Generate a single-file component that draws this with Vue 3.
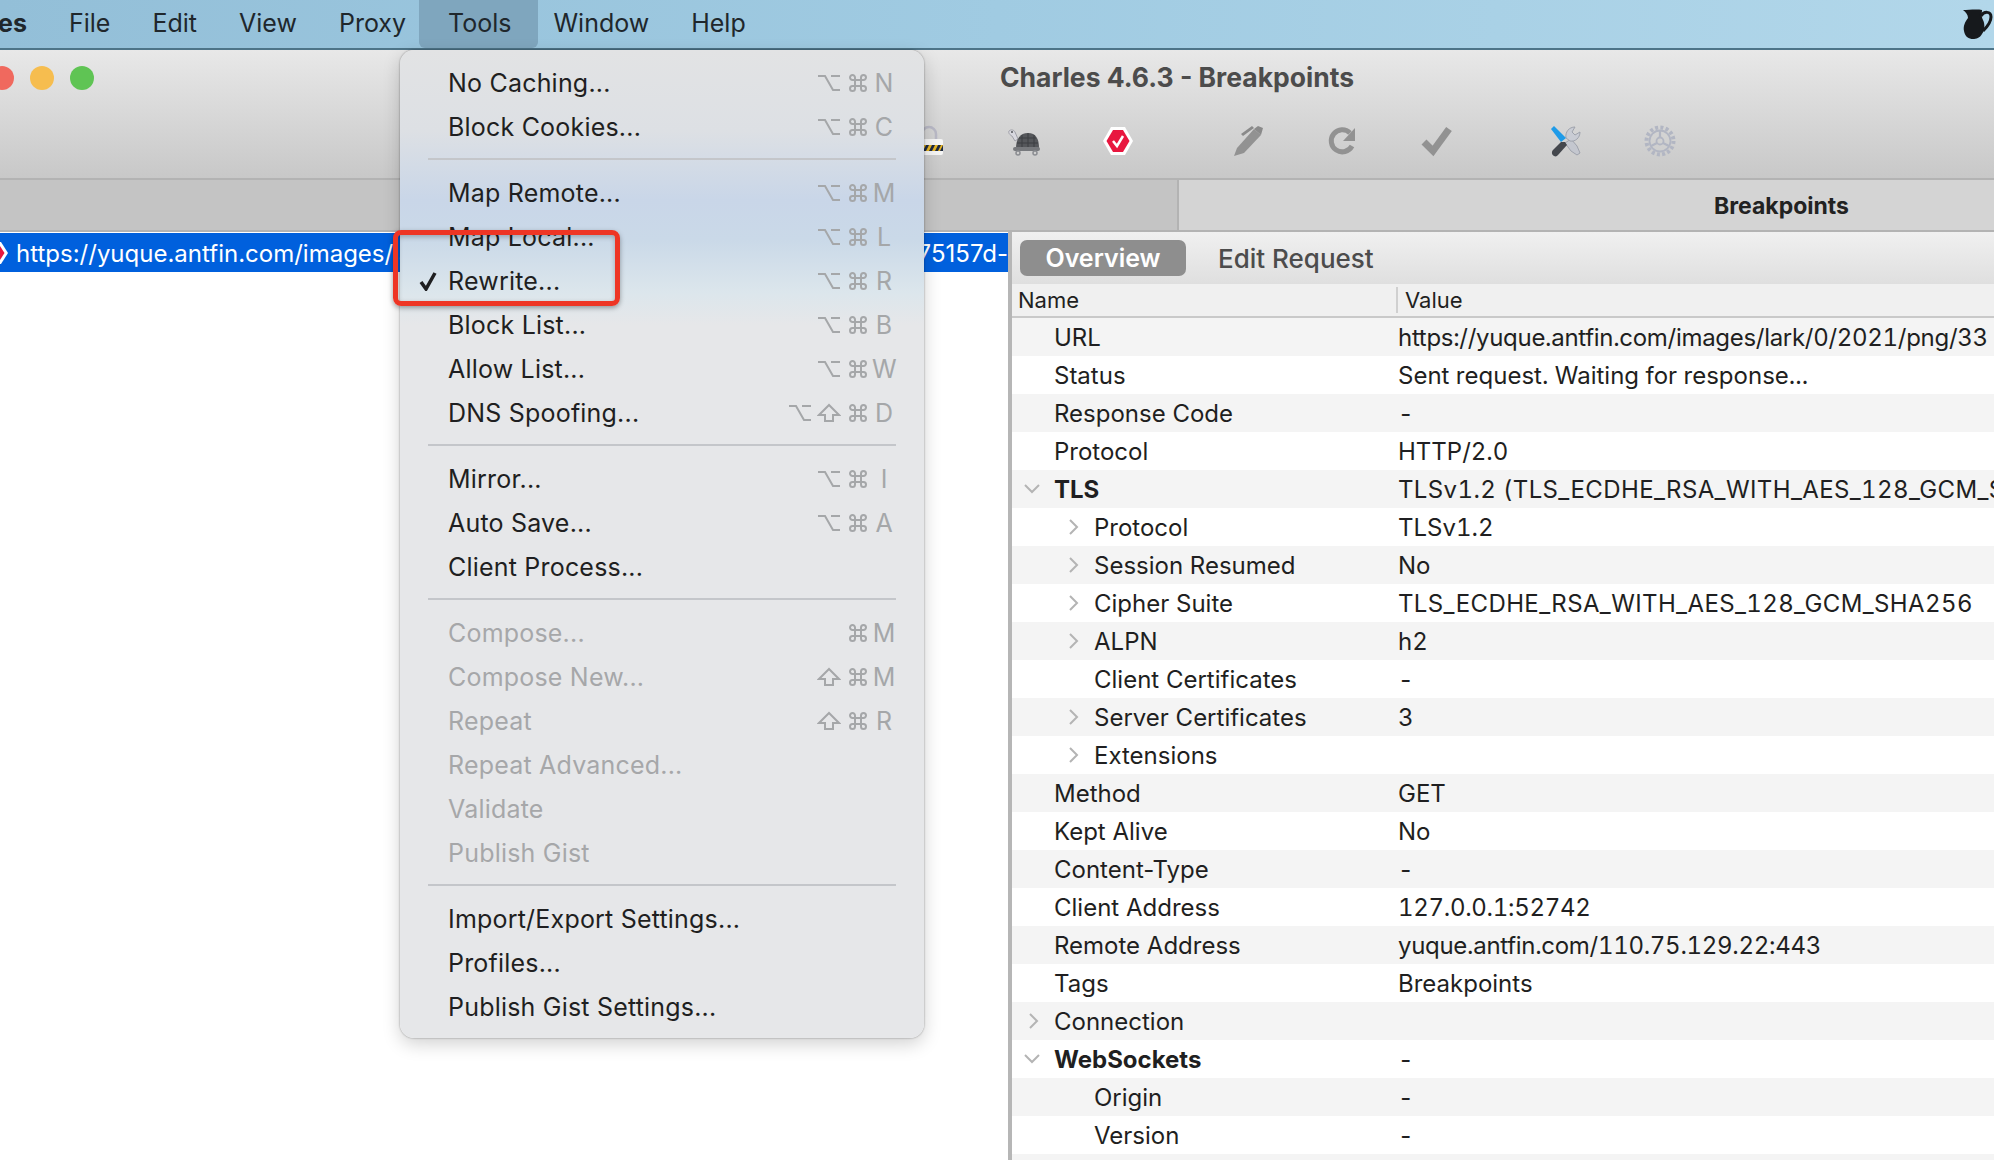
<script setup>
const menuItems = ['File', 'Edit', 'View', 'Proxy', 'Tools', 'Window', 'Help']

const toolGroups = [
  [
    { label: 'No Caching...', keys: ['opt', 'cmd'], key: 'N' },
    { label: 'Block Cookies...', keys: ['opt', 'cmd'], key: 'C' },
  ],
  [
    { label: 'Map Remote...', keys: ['opt', 'cmd'], key: 'M' },
    { label: 'Map Local...', keys: ['opt', 'cmd'], key: 'L' },
    { label: 'Rewrite...', keys: ['opt', 'cmd'], key: 'R', checked: true },
    { label: 'Block List...', keys: ['opt', 'cmd'], key: 'B' },
    { label: 'Allow List...', keys: ['opt', 'cmd'], key: 'W' },
    { label: 'DNS Spoofing...', keys: ['opt', 'shift', 'cmd'], key: 'D' },
  ],
  [
    { label: 'Mirror...', keys: ['opt', 'cmd'], key: 'I' },
    { label: 'Auto Save...', keys: ['opt', 'cmd'], key: 'A' },
    { label: 'Client Process...' },
  ],
  [
    { label: 'Compose...', keys: ['cmd'], key: 'M', disabled: true },
    { label: 'Compose New...', keys: ['shift', 'cmd'], key: 'M', disabled: true },
    { label: 'Repeat', keys: ['shift', 'cmd'], key: 'R', disabled: true },
    { label: 'Repeat Advanced...', disabled: true },
    { label: 'Validate', disabled: true },
    { label: 'Publish Gist', disabled: true },
  ],
  [
    { label: 'Import/Export Settings...' },
    { label: 'Profiles...' },
    { label: 'Publish Gist Settings...' },
  ],
]

const rows = [
  { name: 'URL', value: 'https://yuque.antfin.com/images/lark/0/2021/png/33', kind: 'digits' },
  { name: 'Status', value: 'Sent request. Waiting for response...' },
  { name: 'Response Code', value: '-' },
  { name: 'Protocol', value: 'HTTP/2.0' },
  { name: 'TLS', value: 'TLSv1.2 (TLS_ECDHE_RSA_WITH_AES_128_GCM_SHA256)', bold: true, open: true, kind: 'caps' },
  { name: 'Protocol', value: 'TLSv1.2', level: 1, closed: true },
  { name: 'Session Resumed', value: 'No', level: 1, closed: true },
  { name: 'Cipher Suite', value: 'TLS_ECDHE_RSA_WITH_AES_128_GCM_SHA256', level: 1, closed: true, kind: 'caps' },
  { name: 'ALPN', value: 'h2', level: 1, closed: true },
  { name: 'Client Certificates', value: '-', level: 1 },
  { name: 'Server Certificates', value: '3', level: 1, closed: true },
  { name: 'Extensions', value: '', level: 1, closed: true },
  { name: 'Method', value: 'GET' },
  { name: 'Kept Alive', value: 'No' },
  { name: 'Content-Type', value: '-' },
  { name: 'Client Address', value: '127.0.0.1:52742', kind: 'digits' },
  { name: 'Remote Address', value: 'yuque.antfin.com/110.75.129.22:443', kind: 'digits' },
  { name: 'Tags', value: 'Breakpoints' },
  { name: 'Connection', value: '', closed: true },
  { name: 'WebSockets', value: '-', bold: true, open: true },
  { name: 'Origin', value: '-', level: 1 },
  { name: 'Version', value: '-', level: 1 },
  { name: '', value: '' },
]
</script>

<template>
  <div class="screen">
    <header class="menubar">
      <span class="app-name">es</span>
      <span
        v-for="item in menuItems"
        :key="item"
        class="menubar-item"
        :class="{ 'menubar-item--open': item === 'Tools' }"
      >{{ item }}</span>
      <svg class="jug" viewBox="0 0 32 32" width="32" height="32">
        <path d="M1 2c5 0 14-1 19 0 0 3-1 6 1 10 2 4 2 10-1 14-2 4-6 5-9 5-4 0-8-2-9-8-1-5 1-9 4-13 0-3-2-6-5-8z" fill="#16191c" />
        <path d="M19 8c3-5 10-5 10 1 0 6-5 11-8 14" fill="none" stroke="#16191c" stroke-width="3" />
      </svg>
    </header>

    <div class="window">
      <div class="titlebar">
        <div class="lights">
          <i class="light light--red"></i>
          <i class="light light--yellow"></i>
          <i class="light light--green"></i>
        </div>
        <span class="title">Charles 4.6.3 - Breakpoints</span>
      </div>

      <div class="toolbar">
        <svg class="tool" viewBox="0 0 32 32">
          <path d="M8 16V9a7 7 0 0 1 14 0v7" fill="none" stroke="#b9b9c6" stroke-width="2.5" />
          <rect x="3" y="14" width="26" height="16" rx="2" fill="#f5f5f5" />
          <path d="M3 20h26v6H3z" fill="#1d2a44" />
          <path d="M6 26l3-6h3l-3 6zM12 26l3-6h3l-3 6zM18 26l3-6h3l-3 6zM24 26l3-6h2l-3 6z" fill="#e6b422" />
        </svg>
        <svg class="tool" viewBox="0 0 32 32">
          <path d="M1 6c2-2 5-1 6 1l3 7-3 2-3-5C2 10 0 8 1 6z" fill="#d8d8df" stroke="#a0a0a8" />
          <circle cx="4" cy="7" r="1" fill="#55575b" />
          <path d="M8 23c0-9 4-15 12-15s11 6 11 15z" fill="#55575b" />
          <path d="M14 10v13M20 8v15M26 10v13M9 18h21M11 13h17" stroke="#3d3f42" stroke-width="1" fill="none" />
          <rect x="5" y="22" width="27" height="4" rx="2" fill="#77797d" />
          <circle cx="10" cy="28" r="2" fill="none" stroke="#8b8d92" stroke-width="1.5" />
          <circle cx="27" cy="28" r="2" fill="none" stroke="#8b8d92" stroke-width="1.5" />
        </svg>
        <svg class="tool" viewBox="0 0 32 32">
          <path d="M9 2h14l8 14-8 14H9L1 16z" fill="#fff" />
          <path d="M11 5h10l6.500 11-6.500 11H11L4.500 16z" fill="#e8173f" />
          <path d="M11 16l4 5 6-10" fill="none" stroke="#fff" stroke-width="2.5" />
        </svg>
        <svg class="tool tool--group" viewBox="0 0 32 32">
          <path d="M1 31l3-8L21 4l7 6-17 18z" fill="#929292" />
          <path d="M21 4l4-3 5 2-2 7zM8 9L19 1l2 2L10 11z" fill="#8a8a8a" />
        </svg>
        <svg class="tool" viewBox="0 0 32 32">
          <path d="M25 21a11 11 0 1 1-2-13" fill="none" stroke="#929292" stroke-width="5" />
          <path d="M28 3v13H16z" fill="#929292" />
        </svg>
        <svg class="tool" viewBox="0 0 32 32">
          <path d="M3 17l9 9L28 4" fill="none" stroke="#929292" stroke-width="7" />
        </svg>
        <svg class="tool tool--group tool--tools" viewBox="0 0 32 32">
          <path d="M21 14L27 21l3 7-3 2-6-4-6-8z" fill="#c4c7cf" stroke="#9fa3ad" />
          <path d="M16 13c-1-6 3-11 9-11l-3 5 3 3 5-3c0 6-5 10-10 9z" fill="#c9ccd4" stroke="#9fa3ad" />
          <path d="M11 17l5-4-12-12-3 3z" fill="#1f9be8" />
          <path d="M11 17L3 25c-2 2-1 5 1 6 2 1 3 0 4-1l9-10-2-3z" fill="#44474d" />
        </svg>
        <svg class="tool" viewBox="0 0 32 32">
          <g fill="none" stroke="#b2b6c3">
            <circle cx="16" cy="16" r="13.500" stroke-width="4" stroke-dasharray="3 2.300" />
            <circle cx="16" cy="16" r="10.500" stroke-width="1.800" />
            <circle cx="16" cy="16" r="3.500" stroke-width="1.800" />
            <path d="M16 6v6M7 21l6-3M25 21l-6-3" stroke-width="2.200" />
          </g>
        </svg>
      </div>
    </div>

    <div class="tabs">
      <div class="tab tab--blank"></div>
      <div class="tab tab--active">Breakpoints</div>
    </div>

    <div class="content">
      <section class="requests">
        <div class="request">
          <svg class="request-icon" viewBox="0 0 10 24" width="10" height="24">
            <path d="M0 1h1l7 11-7 11H0z" fill="#fff" />
            <path d="M0 5l4.500 7L0 19z" fill="#e8173f" />
          </svg>
          <span class="request-url">https://yuque.antfin.com/images/lark/0/2021/png/33</span>
          <span class="request-end">75157d-</span>
        </div>
      </section>

      <section class="details">
        <div class="detail-tabs">
          <span class="pill">Overview</span>
          <span class="detail-tab">Edit Request</span>
        </div>
        <div class="table-head">
          <span class="col-name">Name</span>
          <span class="col-value">Value</span>
        </div>
        <div
          v-for="(row, i) in rows"
          :key="i"
          class="row"
          :class="{ 'row--odd': i % 2 === 0, 'row--bold': row.bold }"
        >
          <div class="row-name" :class="{ 'row-name--nested': row.level }">
            <svg v-if="row.open" class="chevron chevron--open" viewBox="0 0 16 10" width="16" height="10">
              <path d="M1 1l7 7 7-7" />
            </svg>
            <svg v-if="row.closed" class="chevron" viewBox="0 0 10 16" width="10" height="16">
              <path d="M1 1l7 7-7 7" />
            </svg>
            <span>{{ row.name }}</span>
          </div>
          <div class="row-value" :class="row.kind && `row-value--${row.kind}`">{{ row.value }}</div>
        </div>
      </section>
    </div>

    <nav class="dropdown">
      <template v-for="(group, g) in toolGroups" :key="g">
        <hr v-if="g > 0" class="separator" />
        <div
          v-for="entry in group"
          :key="entry.label"
          class="entry"
          :class="{ 'entry--disabled': entry.disabled }"
        >
          <svg v-if="entry.checked" class="check" viewBox="0 0 20 20" width="20" height="20">
            <path d="M3 11l5 7L17 2" fill="none" stroke="#1f1f21" stroke-width="3.500" />
          </svg>
          <span class="entry-label">{{ entry.label }}</span>
          <span v-if="entry.key" class="shortcut">
            <span v-for="k in entry.keys" :key="k" class="glyph">
              <svg v-if="k === 'opt'" viewBox="0 0 22 18" width="22" height="18">
                <path d="M0 2h7l8 14h7M13 2h9" />
              </svg>
              <svg v-else-if="k === 'shift'" viewBox="0 0 24 20" width="24" height="20">
                <path d="M12 2L2 12h6v6h8v-6h6z" />
              </svg>
              <svg v-else viewBox="0 0 20 20" width="20" height="20">
                <path d="M7 7V4.500A2.500 2.500 0 1 0 4.500 7H15.500A2.500 2.500 0 1 0 13 4.500V15.500A2.500 2.500 0 1 0 15.500 13H4.500A2.500 2.500 0 1 0 7 15.500z" />
              </svg>
            </span>
            <span class="letter">{{ entry.key }}</span>
          </span>
        </div>
      </template>
    </nav>

    <div class="callout"></div>
  </div>
</template>

<style scoped>
.screen {
  position: relative;
  width: 1994px;
  height: 1160px;
  overflow: hidden;
  display: flex;
  flex-direction: column;
  background: #fff;
  font-family: Inter, "Noto Sans", "Liberation Sans", sans-serif;
  color: #1f1f21;
}

.menubar {
  height: 48px;
  flex: none;
  display: flex;
  align-items: stretch;
  background: linear-gradient(90deg, #93bfd8, #a0cbe2 50%, #b2d7ea);
  border-bottom: 2px solid #4d7488;
  font-size: 25px;
  color: #20272c;
}

.app-name {
  width: 50px;
  margin-left: -2px;
  line-height: 46px;
  font-weight: 700;
}

.menubar-item {
  padding: 0 21px;
  line-height: 46px;
}

.menubar-item--open {
  background: #7fa6be;
  border-radius: 0 0 6px 6px;
  padding: 0 27px 0 29px;
  margin: 0 -6px 0 -8px;
}

.jug {
  margin: 8px 0 0 auto;
}

.window {
  flex: none;
  height: 128px;
  display: flex;
  flex-direction: column;
  background: linear-gradient(180deg, #e8e8e8, #c8c8c8);
  border-bottom: 2px solid #b3b3b3;
}

.titlebar {
  position: relative;
  height: 54px;
  display: flex;
  align-items: center;
  justify-content: center;
  padding-left: 360px;
}

.lights {
  position: absolute;
  left: -10px;
  top: 16px;
  display: flex;
  gap: 16px;
}

.light {
  width: 24px;
  height: 24px;
  border-radius: 50%;
}

.light--red { background: #f0695e; }
.light--yellow { background: #f6bd4f; }
.light--green { background: #5fc454; }

.title {
  font-size: 26.5px;
  font-weight: 700;
  color: #4c4c4c;
}

.toolbar {
  display: flex;
  align-items: center;
  gap: 62px;
  height: 64px;
  padding: 5px 0 0 914px;
}

.tool {
  flex: none;
  width: 32px;
  height: 32px;
}

.tool--group {
  margin-left: 37px;
}

.tool--tools {
  margin-left: 35px;
}

.tabs {
  flex: none;
  display: flex;
  height: 50px;
  border-bottom: 2px solid #b3b3b3;
}

.tab--blank {
  width: 1177px;
  background: #c4c4c4;
  border-right: 2px solid #b3b3b3;
}

.tab--active {
  flex: 1;
  display: flex;
  align-items: center;
  justify-content: center;
  padding: 2px 0 0 390px;
  background: #d4d4d4;
  font-size: 23px;
  font-weight: 700;
  color: #222;
}

.content {
  flex: 1;
  min-height: 0;
  display: flex;
}

.requests {
  width: 1008px;
  flex: none;
  padding-top: 1px;
  border-right: 4px solid #b6b6b6;
}

.request {
  height: 39px;
  box-sizing: border-box;
  padding-top: 2px;
  display: flex;
  align-items: center;
  overflow: hidden;
  background: #0060dd;
  color: #fff;
  font-size: 24px;
  white-space: nowrap;
}

.request-icon {
  flex: none;
  margin: -2px 6px 0 0;
}

.request-url {
  flex: 1;
  min-width: 0;
  overflow: hidden;
}

.details {
  flex: 1;
  min-width: 0;
  overflow: hidden;
  font-size: 24px;
}

.detail-tabs {
  height: 52px;
  display: flex;
  align-items: center;
  padding: 0 0 0 8px;
  background: linear-gradient(180deg, #f0f0f0, #dfdfdf);
}

.pill {
  width: 166px;
  height: 36px;
  display: flex;
  align-items: center;
  justify-content: center;
  background: #8e8e8e;
  border-radius: 7px;
  color: #fff;
  font-weight: 600;
  font-size: 25px;
}

.detail-tab {
  margin-left: 32px;
  font-size: 26px;
  font-weight: 500;
  color: #4c4c4c;
}

.table-head {
  height: 32px;
  display: flex;
  align-items: center;
  background: #f0f0f0;
  border-bottom: 2px solid #c9c9c9;
  font-size: 22px;
}

.col-name {
  width: 384px;
  box-sizing: border-box;
  padding-left: 6px;
}

.col-value {
  flex: 1;
  padding-left: 7px;
  border-left: 2px solid #d0d0d0;
}

.row {
  height: 38px;
  display: flex;
  align-items: center;
  white-space: nowrap;
}

.row--odd {
  background: #f4f4f4;
}

.row-name {
  position: relative;
  width: 386px;
  box-sizing: border-box;
  flex: none;
  padding-left: 42px;
}

.row-name--nested {
  padding-left: 82px;
}

.row--bold .row-name {
  font-weight: 700;
}

.row-value {
  overflow: hidden;
  font-variant-numeric: tabular-nums;
}

.row-value--digits {
  letter-spacing: -0.3px;
}

.row-value--caps {
  letter-spacing: 0.38px;
}

.chevron {
  position: absolute;
  left: 17px;
  top: 50%;
  transform: translateY(-50%);
  fill: none;
  stroke: #b4b4b4;
  stroke-width: 2;
}

.chevron--open {
  left: 12px;
}

.row-name--nested .chevron {
  left: 57px;
}

.dropdown {
  position: absolute;
  left: 400px;
  top: 50px;
  width: 524px;
  height: 988px;
  box-sizing: border-box;
  padding: 11px 0 9px;
  border-radius: 14px;
  background: linear-gradient(180deg, #e2e3e4 0, #dde0e4 80px, #c9d6e8 150px, #cad9e8 190px, #dce6ec 243px, #e6e7e9 275px, #e6e7e9 100%);
  box-shadow: 0 0 2px rgba(0, 0, 0, 0.45), 0 6px 18px rgba(0, 0, 0, 0.18);
  font-size: 25px;
}

.separator {
  height: 2px;
  margin: 9px 28px 11px;
  border: 0;
  background: #c4c6ca;
}

.entry {
  position: relative;
  height: 44px;
  display: flex;
  align-items: center;
  padding-left: 48px;
  letter-spacing: 0.2px;
}

.entry--disabled {
  color: #a6a7a9;
}

.check {
  position: absolute;
  left: 18px;
  top: 12px;
}

.shortcut {
  position: absolute;
  left: 385px;
  top: 0;
  height: 44px;
  width: 111px;
  display: flex;
  align-items: center;
  justify-content: flex-end;
  color: #a5a7a9;
  letter-spacing: 0;
}

.glyph {
  width: 29px;
  display: flex;
  align-items: center;
  justify-content: center;
}

.glyph svg {
  fill: none;
  stroke: #a5a7a9;
  stroke-width: 2;
}

.letter {
  width: 24px;
  text-align: center;
}

.callout {
  position: absolute;
  left: 393px;
  top: 230px;
  width: 227px;
  height: 76px;
  box-sizing: border-box;
  border: 5px solid #ee3524;
  border-radius: 8px;
  box-shadow: 0 2px 5px rgba(0, 0, 0, 0.35), inset 0 2px 5px rgba(0, 0, 0, 0.25);
}
</style>
